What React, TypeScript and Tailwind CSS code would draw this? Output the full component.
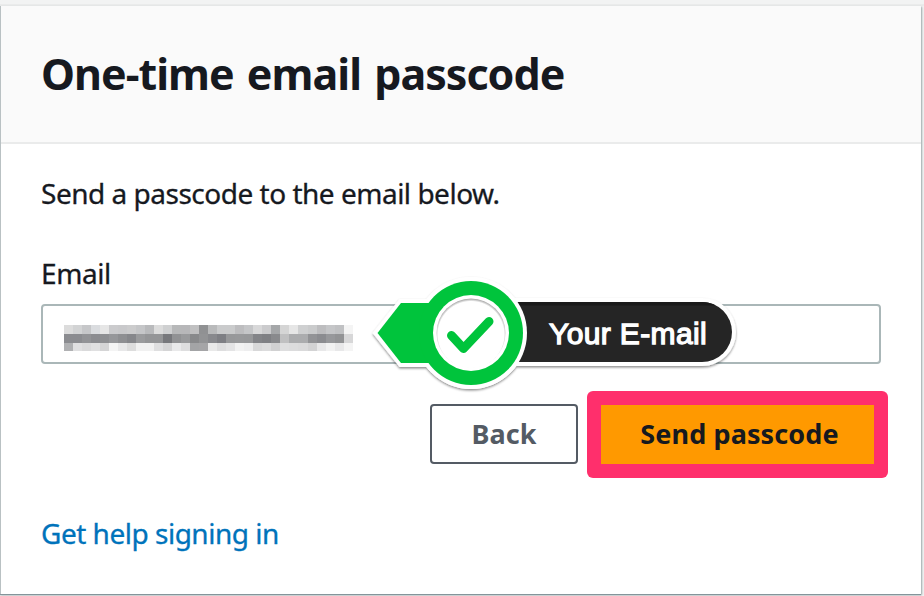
const MOSAIC_ROWS = [
  'dcdcdc d2d3d4 c6c7c9 dadcdf e6e6e6 cbcbcd c9c9cb cccccd c5c6c8 b9babc dcdcdc cfd0d1 b7b8b9 b7b7b9 c0c0c1 909193 b9babb cacbcc cacbcc bdbdbf c5c6c8 d8d8d9 cbcbcd a5a7a9 d5d5d5 e6e6e6 cfd0d1 cacbcc bdbdbf c5c6c8 c0c1c3 f4f4f4',
  '8b8c90 8b8c90 929396 8b8c90 8e8f92 96979a 8e8f92 86878b 9a9b9d 949597 949597 77787c 919294 999a9c 88898b 929395 88898d 7e7f84 97989a 98999b 97989a 838488 7f8084 898a8d c0c0c1 abacae abacae 929396 8b8c90 97989b 929395 d7d7d8',
  'b0b1b3 e0e0e1 dadadb e0e0e1 d5d5d6 f4f4f4 e8e8e9 dddddd f1f1f1 f1f1f1 dfdfe0 d5d5d6 e9e9ea dededf a3a4a6 a5a5a7 e9e9e9 dededf e4e4e5 f2f2f2 eeeeef d8d8d9 dcdcdd d1d1d2 dededf dcdcdd dadadb d3d3d4 e8e8e9 f2f2f2 e8e8e9 f4f4f4',
].map((row) => row.split(' '));

function RedactedEmail() {
  return (
    <svg className="ml-5 mt-1 block" width="292" height="30" viewBox="0 0 292 30" shapeRendering="crispEdges" role="img" aria-label="Redacted email">
      {MOSAIC_ROWS.map((row, y) =>
        row.map((color, x) => (
          <rect key={`${y}-${x}`} x={0.7 + x * 9.03} y={4 + y * 9} width={9.1} height={y === 2 ? 8 : 9} fill={`#${color}`} />
        )),
      )}
    </svg>
  );
}

function Callout() {
  return (
    <div className="absolute left-[325px] top-[-34px] h-[122px] w-[374px]">
      <svg className="block" width="374" height="122" viewBox="368 272 374 122" aria-hidden="true">
        <defs>
          <filter id="drop" x="-10%" y="-10%" width="120%" height="130%">
            <feDropShadow dx="0" dy="1.5" stdDeviation="1.1" floodColor="#000" floodOpacity="0.45" />
          </filter>
          <radialGradient id="inset" cx="471" cy="334.500" r="35.500" gradientUnits="userSpaceOnUse">
            <stop offset="0.93" stopColor="#fff" />
            <stop offset="1" stopColor="#aaa" />
          </radialGradient>
        </defs>
        <g filter="url(#drop)">
          <path d="M480 298H702a34 34 0 0 1 0 68H480Z" fill="#fff" />
          <path d="M399.500 299H460V367H399.500L372.500 333Z" fill="#fff" />
          <circle cx="471" cy="333" r="56" fill="#fff" />
        </g>
        <path d="M480 302H702a30 30 0 0 1 0 60H480Z" fill="#252525" />
        <path d="M480 302H702q8 0 14 3.500H480Z" fill="#1a1a1a" />
        <circle cx="471" cy="333" r="56" fill="#fff" />
        <path d="M401 303H471V363H401L377.500 333Z" fill="#00c43c" />
        <circle cx="471" cy="333" r="52" fill="#00c43c" />
        <circle cx="471" cy="333" r="38" fill="#fff" />
        <circle cx="471" cy="333" r="34.500" fill="url(#inset)" />
        <path d="M451.500 335.500L463.500 348.500L489 321.500" fill="none" stroke="#00c43c" strokeWidth="9" strokeLinecap="round" strokeLinejoin="round" />
      </svg>
      <span className="absolute left-[181px] top-[43px] whitespace-nowrap font-['Liberation_Sans',Arial,sans-serif] text-[30px] leading-[38px] tracking-[0.38px] text-white [-webkit-text-stroke:1.3px_#fff]">
        Your E-mail
      </span>
    </div>
  );
}

export default function App() {
  return (
    <div className="flex h-[596px] w-[924px] flex-col overflow-hidden bg-[#f2f3f3] font-['Noto_Sans',sans-serif] text-[#16191f]">
      <div className="mt-1 h-0.5 shrink-0 bg-[#eaebeb]" />
      <main className="h-[588px] w-[921px] shrink-0 border-l border-[#b9c1c3] bg-white shadow-[0_1px_1px_0_#84949a,1px_1px_2px_#a5b0b0]">
        <header className="flex h-[138px] items-center border-b-2 border-[#eaebeb] bg-[#fafafa] pl-10">
          <h1 className="whitespace-nowrap text-[43px] font-bold leading-[60px] tracking-[-0.98px] [word-spacing:3px]">One-time email passcode</h1>
        </header>
        <section className="flex flex-col px-10 pt-[29px]">
          <p className="h-10 whitespace-nowrap text-[28px] leading-10 tracking-[-0.49px] [-webkit-text-stroke:0.3px_#16191f]">Send a passcode to the email below.</p>
          <label className="mt-10 h-10 text-[28px] leading-10 tracking-[-0.4px] [-webkit-text-stroke:0.3px_#16191f]">Email</label>
          <div className="relative mt-[11px] flex h-[60px] w-[840px] items-center rounded-[4px] border-2 border-[#aab7b8] bg-white">
            <RedactedEmail />
            <Callout />
          </div>
          <div className="mt-[27px] flex w-[847px] items-start justify-end gap-[9px]">
            <button className="mt-[13px] h-[60px] w-[148px] rounded-[4px] border-2 border-[#545b64] bg-white text-[27px] font-bold leading-10 text-[#545b64]">
              Back
            </button>
            <div className="h-[87px] w-[301px] rounded-[6px] bg-[#ff2f6c] p-[14px]">
              <button className="h-[59px] w-[273px] whitespace-nowrap bg-[#ff9900] pb-0.5 pl-1 text-[27px] font-bold leading-10 tracking-[0.1px]">Send passcode</button>
            </div>
          </div>
          <a className="mt-[35px] w-fit whitespace-nowrap text-[28px] leading-10 tracking-[-0.49px] text-[#0073bb] [-webkit-text-stroke:0.3px_#0073bb]">Get help signing in</a>
        </section>
      </main>
    </div>
  );
}
